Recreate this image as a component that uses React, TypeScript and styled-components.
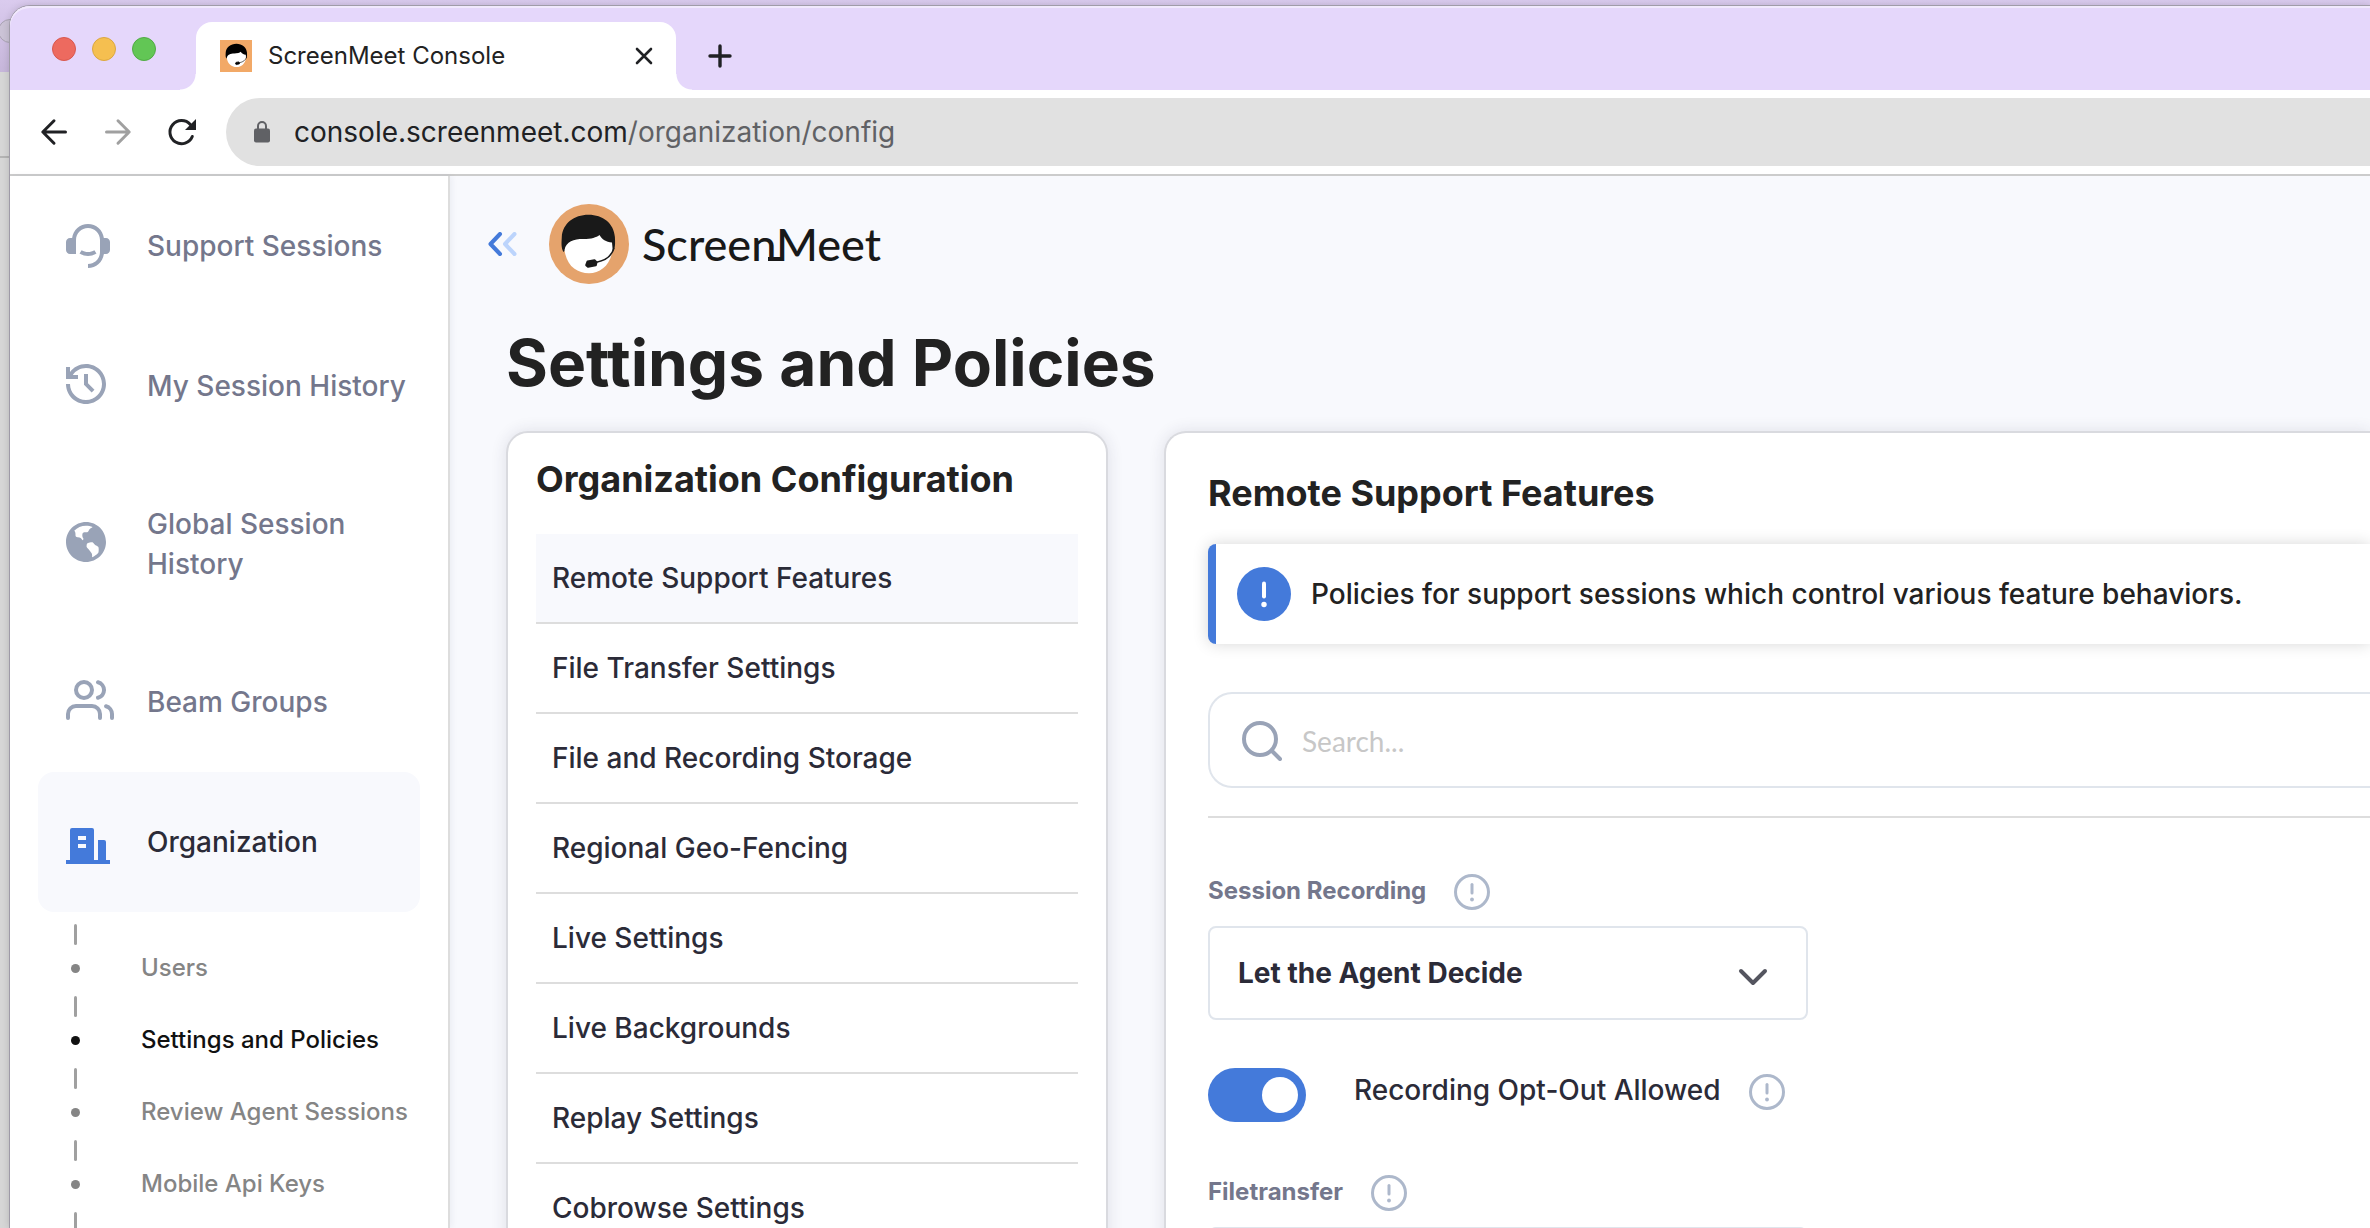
import React from "react";
import styled, { createGlobalStyle } from "styled-components";
import { RiCustomerService2Fill, RiEarthFill, RiHistoryLine } from "react-icons/ri";

const sans = `Inter, "Liberation Sans", sans-serif`;

const color = {
  page: "#f8f9fd",
  ink: "#222222",
  navy: "#2b2b38",
  slate: "#74778c",
  icon: "#99a3b7",
  hint: "#adb8cb",
  blue: "#447ada",
  line: "#dddddd",
  field: "#e0e5ec",
};

const GlobalStyle = createGlobalStyle`
  *, *::before, *::after { box-sizing: border-box; }
  body { margin: 0; font-family: ${sans}; color: ${color.ink}; }
  h1, h2, p, ul { margin: 0; padding: 0; }
  ul { list-style: none; }
  a { color: inherit; text-decoration: none; }
  button { border: 0; padding: 0; background: none; color: inherit; cursor: pointer; }
  svg { display: block; flex: none; }
`;

/* ---------- Desktop and browser window ---------- */

const Desktop = styled.div`
  position: relative;
  display: flex;
  height: 100vh;
  padding: 6px 0 0 10px;
  overflow: hidden;
  background:
    linear-gradient(#b4b4b4, #b4b4b4) 0 156px / 10px 2px no-repeat,
    linear-gradient(#dacbee, #c6b6da) 0 0 / 100% 72px no-repeat,
    #d6d6d6;
`;

const HiddenWindowButton = styled.span`
  position: absolute;
  top: 19px;
  left: -2px;
  width: 24px;
  height: 24px;
  border: 1px solid #a9a3b3;
  border-radius: 50%;
  background: #cbc3d6;
`;

const Window = styled.div`
  position: relative;
  display: flex;
  flex-direction: column;
  flex: 1;
  min-width: 0;
  border-radius: 20px 0 0 0;
  background: #ffffff;
  box-shadow: 0 0 0 1px #a09ca8, 0 0 8px rgba(0, 0, 0, 0.18);
`;

const TabStrip = styled.div`
  display: flex;
  align-items: flex-end;
  flex: none;
  height: 84px;
  padding-left: 42px;
  border-radius: 20px 0 0 0;
  background: #e5d7fb;
  box-shadow: inset 0 2px 0 #f1e9fd;
`;

const WindowButtons = styled.div`
  display: flex;
  gap: 16px;
  margin: 0 40px 29px 0;
`;

const WindowButton = styled.button<{ $fill: string; $edge: string }>`
  width: 24px;
  height: 24px;
  border: 1px solid ${(p) => p.$edge};
  border-radius: 50%;
  background: ${(p) => p.$fill};
`;

const Tab = styled.div`
  position: relative;
  display: flex;
  align-items: center;
  gap: 16px;
  width: 480px;
  height: 68px;
  padding: 0 20px 0 24px;
  border-radius: 16px 16px 0 0;
  background: #ffffff;

  &::before,
  &::after {
    content: "";
    position: absolute;
    bottom: 0;
    width: 16px;
    height: 16px;
  }
  &::before {
    right: 100%;
    background: radial-gradient(circle at 0 0, transparent 15px, #ffffff 16px);
  }
  &::after {
    left: 100%;
    background: radial-gradient(circle at 100% 0, transparent 15px, #ffffff 16px);
  }
`;

const TabTitle = styled.span`
  flex: 1;
  font-size: 24px;
  line-height: 32px;
  white-space: nowrap;
`;

const NewTabButton = styled.button`
  margin: 0 0 22px 32px;
`;

const Toolbar = styled.div`
  display: flex;
  align-items: center;
  flex: none;
  height: 86px;
  padding-left: 28px;
  border-bottom: 2px solid #cccccc;
`;

const ToolbarButtons = styled.div`
  display: flex;
  gap: 32px;
  margin-right: 28px;
`;

const AddressBar = styled.div`
  display: flex;
  align-items: center;
  gap: 24px;
  flex: 1;
  height: 68px;
  padding-left: 28px;
  border-radius: 34px 0 0 34px;
  background: #e1e1e1;
`;

const Url = styled.div`
  font-size: 28px;
  line-height: 36px;
  color: #202124;
  white-space: nowrap;
`;

const UrlPath = styled.span`
  color: #606165;
`;

const Page = styled.div`
  display: flex;
  flex: 1;
  min-height: 0;
  background: ${color.page};
`;

/* ---------- Sidebar ---------- */

const Sidebar = styled.nav`
  flex: none;
  width: 440px;
  padding: 0 28px;
  border-right: 2px solid ${color.line};
  background: #ffffff;
  box-shadow: 2px 0 6px rgba(40, 50, 80, 0.06);
`;

const NavItem = styled.a<{ $active?: boolean }>`
  display: flex;
  align-items: center;
  gap: 33px;
  padding: 48px 8px 48px 28px;
  border-radius: 16px;
  background: ${(p) => (p.$active ? color.page : "transparent")};
  color: ${(p) => (p.$active ? color.navy : color.slate)};
  font-size: 28px;
  font-weight: 500;
  line-height: 40px;
`;

const NavIcon = styled.span<{ $active?: boolean }>`
  flex: none;
  width: 48px;
  color: ${(p) => (p.$active ? color.blue : color.icon)};
`;

const SubItem = styled.a<{ $active?: boolean }>`
  display: grid;
  grid-template-columns: 12px auto;
  justify-items: center;
  justify-content: start;
  column-gap: 60px;
  padding: 12px 0 0 31px;
  color: ${(p) => (p.$active ? "#111111" : "#858585")};
  font-size: 24px;
  font-weight: 500;
  line-height: 32px;
  white-space: nowrap;
`;

const Tick = styled.span`
  grid-column: 1 / -1;
  justify-self: start;
  width: 3px;
  height: 21px;
  margin: 0 0 7px 5px;
  border-radius: 2px;
  background: #a0a0a0;
`;

const Dot = styled.span`
  align-self: center;
  width: 9px;
  height: 9px;
  border-radius: 50%;
  background: currentColor;
`;

const Trail = styled.div`
  padding: 12px 0 0 31px;
`;

/* ---------- Main column ---------- */

const Main = styled.main`
  display: flex;
  flex-direction: column;
  flex: 1;
  min-width: 0;
  padding: 28px 0 0 38px;
`;

const BrandBar = styled.header`
  display: flex;
  align-items: center;
`;

const CollapseButton = styled.button`
  margin-right: 32px;
`;

const BrandLink = styled.a`
  display: flex;
  align-items: center;
  gap: 13px;
`;

const Wordmark = styled.span`
  position: relative;
  font-family: Lato, "Open Sans", sans-serif;
  font-size: 45px;
  font-weight: 500;
  line-height: 56px;
  color: #191919;

  &::after {
    content: "";
    position: absolute;
    top: 41px;
    left: 126px;
    width: 13px;
    height: 4px;
    background: currentColor;
  }
`;

const Title = styled.h1`
  margin: 39px 0 28px 18px;
  font-size: 64px;
  font-weight: 700;
  line-height: 80px;
`;

const Columns = styled.div`
  display: flex;
  flex: 1;
  gap: 56px;
  padding-left: 18px;
`;

const Card = styled.section`
  border: 2px solid #d9dadf;
  border-radius: 22px;
  background: #ffffff;
  box-shadow: 0 0 16px rgba(40, 45, 70, 0.12);
`;

const MenuCard = styled(Card)`
  flex: none;
  width: 602px;
  padding: 24px 28px;
`;

const DetailCard = styled(Card)`
  flex: 1;
  min-width: 0;
  padding: 38px 0 38px 42px;
  border-right: 0;
  border-radius: 22px 0 0 22px;
`;

const CardTitle = styled.h2<{ $gap: number }>`
  margin-bottom: ${(p) => p.$gap}px;
  font-size: 36px;
  font-weight: 700;
  line-height: 44px;
`;

const MenuLink = styled.a<{ $active?: boolean }>`
  display: block;
  padding: 24px 16px;
  border-bottom: 2px solid ${color.line};
  background: ${(p) => (p.$active ? color.page : "transparent")};
  color: ${color.navy};
  font-size: 28px;
  font-weight: 500;
  line-height: 40px;
`;

const Banner = styled.div`
  display: flex;
  align-items: center;
  gap: 20px;
  height: 100px;
  padding-left: 21px;
  border-left: 8px solid ${color.blue};
  border-radius: 8px 0 0 8px;
  background: #ffffff;
  box-shadow: 0 0 16px rgba(0, 0, 0, 0.16);
  font-size: 28px;
  font-weight: 500;
  line-height: 40px;
`;

const SearchField = styled.label`
  display: flex;
  align-items: center;
  gap: 20px;
  height: 96px;
  margin-top: 48px;
  padding: 2px 0 0 32px;
  border: 2px solid ${color.field};
  border-right: 0;
  border-radius: 24px 0 0 24px;
`;

const SearchInput = styled.input`
  flex: 1;
  min-width: 0;
  padding: 0;
  border: 0;
  outline: 0;
  background: transparent;
  font-family: Lato, sans-serif;
  font-size: 28px;
  line-height: 36px;
  color: ${color.navy};

  &::placeholder {
    color: #c7c7c7;
    opacity: 1;
  }
`;

const Divider = styled.hr`
  height: 2px;
  margin: 28px 0 56px;
  border: 0;
  background: ${color.line};
`;

const Caption = styled.div`
  display: flex;
  gap: 28px;
  height: 36px;
`;

const FieldLabel = styled.label`
  color: ${color.slate};
  font-size: 24px;
  font-weight: 700;
  line-height: 34px;
`;

const SelectBox = styled.div`
  display: grid;
  align-items: center;
  width: 600px;
  margin-top: 16px;

  > * {
    grid-area: 1 / 1;
  }
  > svg {
    justify-self: end;
    margin: 8px 40px 0 0;
    pointer-events: none;
  }
`;

const Select = styled.select`
  appearance: none;
  width: 100%;
  height: 94px;
  padding: 0 80px 0 28px;
  border: 2px solid ${color.field};
  border-radius: 8px;
  background: #ffffff;
  color: ${color.navy};
  font-family: inherit;
  font-size: 28px;
  font-weight: 700;
`;

const ToggleRow = styled.div`
  display: flex;
  align-items: flex-start;
  gap: 48px;
  margin: 48px 0 53px;
`;

const Toggle = styled.input`
  appearance: none;
  display: flex;
  align-items: center;
  justify-content: flex-end;
  width: 98px;
  height: 54px;
  margin: 0;
  padding: 0 8px;
  border-radius: 27px;
  background: ${color.blue};

  &::before {
    content: "";
    width: 36px;
    height: 36px;
    border-radius: 50%;
    background: #ffffff;
  }
  &:not(:checked) {
    justify-content: flex-start;
    background: ${color.icon};
  }
`;

const ToggleCaption = styled(Caption)`
  margin-top: 6px;
`;

const ToggleLabel = styled.label`
  color: ${color.navy};
  font-size: 28px;
  font-weight: 500;
  line-height: 32px;
`;

/* ---------- Drawings ---------- */

const AgentHead = ({ hair }: { hair: string }) => (
  <>
    <path
      d="M14.6 48C11.8 44 12.6 38 12.8 33C13.6 19.500 25 10.700 39.500 10.700C54 10.700 65 19.500 65.900 33C66.100 38 66.600 43 64.500 47L58 40L40 36L22 40Z"
      fill={hair}
    />
    <path
      d="M15.500 46C17 37.500 25 35 34 35C43 35 47 33.500 50.500 31C53 35.500 57 38 63 38.500L63.600 45C62 61 51.500 69.200 40 69.200C28 69.200 17.500 62 15.500 46Z"
      fill="#ffffff"
    />
    <path d="M65 44C63 51.500 56.500 56.500 47.500 58.200" fill="none" stroke={hair} strokeWidth="1.500" />
    <path
      d="M38.500 57.500L45.500 56.200L47.500 58.200L46.800 61.200L39 62.800L37.200 61.200Z"
      fill={hair}
      stroke={hair}
      strokeWidth="2"
      strokeLinejoin="round"
    />
  </>
);

const BrandMark = () => (
  <svg width="80" height="80" viewBox="0 0 80 80" aria-hidden="true">
    <circle cx="40" cy="40" r="40" fill="#e5a36c" />
    <AgentHead hair="#191919" />
  </svg>
);

const Favicon = () => (
  <svg width="32" height="32" viewBox="0 0 32 32" aria-hidden="true">
    <rect width="32" height="32" fill="#f2a967" />
    <g transform="translate(0.6 -0.6) scale(0.4)">
      <AgentHead hair="#000000" />
    </g>
  </svg>
);

const CloseIcon = () => (
  <svg width="24" height="24" viewBox="0 0 24 24" stroke="#202124" strokeWidth="2.600" strokeLinecap="round">
    <path d="M5 5L19 19M19 5L5 19" />
  </svg>
);

const PlusIcon = () => (
  <svg width="24" height="24" viewBox="0 0 24 24" stroke="#202124" strokeWidth="3.400" strokeLinecap="round">
    <path d="M12 2V22M2 12H22" />
  </svg>
);

const ArrowIcon = ({ forward }: { forward?: boolean }) => (
  <svg
    width="32"
    height="32"
    viewBox="0 0 32 32"
    fill="none"
    stroke={forward ? "#a0a0a0" : "#202124"}
    strokeWidth="3"
    strokeLinecap="round"
    strokeLinejoin="round"
  >
    <path d={forward ? "M4.500 16H27M16 4.800L27.200 16L16 27.200" : "M27.500 16H5M16 4.800L4.800 16L16 27.200"} />
  </svg>
);

const ReloadIcon = () => (
  <svg width="32" height="32" viewBox="0 0 32 32">
    <path d="M26.300 20.500A11.600 11.600 0 1 1 24.300 8.500" fill="none" stroke="#202124" strokeWidth="3" strokeLinecap="round" />
    <path d="M30 3V14H19Z" fill="#202124" />
  </svg>
);

const LockIcon = () => (
  <svg width="16" height="22" viewBox="0 0 16 22" aria-hidden="true">
    <rect y="7.500" width="16" height="14" rx="2" fill="#606165" />
    <path d="M4 9V5A4 4 0 0 1 12 5V9" fill="none" stroke="#606165" strokeWidth="2" />
  </svg>
);

const CollapseIcon = () => (
  <svg width="29" height="24" viewBox="0 0 29 24" fill="none" strokeWidth="4" strokeLinecap="round" strokeLinejoin="round">
    <path d="M12 2L2.500 12L12 22" stroke={color.blue} />
    <path d="M26.500 2L17 12L26.500 22" stroke="#bcd4fc" />
  </svg>
);

const GroupsIcon = () => (
  <svg
    width="48"
    height="44"
    viewBox="0 2 24 22"
    fill="none"
    stroke="currentColor"
    strokeWidth="2"
    strokeLinecap="round"
    strokeLinejoin="round"
  >
    <path d="M17 21v-2a4 4 0 0 0-4-4H5a4 4 0 0 0-4 4v2" />
    <circle cx="9" cy="7" r="4" />
    <path d="M23 21v-2a4 4 0 0 0-3-3.870" />
    <path d="M16 3.130a4 4 0 0 1 0 7.750" />
  </svg>
);

const BuildingIcon = () => (
  <svg width="44" height="44" viewBox="1 -1 22 22" fill="currentColor">
    <path d="M21 19h2v2H1v-2h2V4a1 1 0 0 1 1-1h10a1 1 0 0 1 1 1v15h2V9h3a1 1 0 0 1 1 1v9zM7 11v2h4v-2H7zm0-4v2h4V7H7z" />
  </svg>
);

const NoticeIcon = () => (
  <svg width="54" height="54" viewBox="0 0 54 54" aria-hidden="true">
    <circle cx="27" cy="27" r="27" fill={color.blue} />
    <path d="M27 16.500V29.500" stroke="#ffffff" strokeWidth="4" strokeLinecap="round" />
    <circle cx="27" cy="37.500" r="2.700" fill="#ffffff" />
  </svg>
);

const SearchIcon = () => (
  <svg width="40" height="40" viewBox="0 0 40 40" fill="none" stroke={color.icon} strokeWidth="4" strokeLinecap="round">
    <circle cx="18" cy="18" r="16" />
    <path d="M30 30L38 38" />
  </svg>
);

const HintIcon = () => (
  <svg width="36" height="36" viewBox="0 0 36 36" fill="none" stroke={color.hint} strokeWidth="3" strokeLinecap="round">
    <circle cx="18" cy="18" r="16.500" />
    <path d="M18 10.500V19" />
    <circle cx="18" cy="25.500" r="1.900" fill={color.hint} stroke="none" />
  </svg>
);

const ChevronIcon = () => (
  <svg width="30" height="18" viewBox="0 0 30 18" fill="none" stroke="#54555f" strokeWidth="4" strokeLinecap="round" strokeLinejoin="round">
    <path d="M3 3L15 15L27 3" />
  </svg>
);

/* ---------- Content ---------- */

const navItems = [
  { label: "Support Sessions", icon: <RiCustomerService2Fill size={44} viewBox="1 1 22 22" /> },
  { label: "My Session History", icon: <RiHistoryLine size={44} viewBox="2 2 22 22" /> },
  { label: "Global Session History", icon: <RiEarthFill size={44} viewBox="2 2 22 22" /> },
  { label: "Beam Groups", icon: <GroupsIcon /> },
  { label: "Organization", icon: <BuildingIcon />, active: true },
];

const subItems = ["Users", "Settings and Policies", "Review Agent Sessions", "Mobile Api Keys"];

const menuItems = [
  "Remote Support Features",
  "File Transfer Settings",
  "File and Recording Storage",
  "Regional Geo-Fencing",
  "Live Settings",
  "Live Backgrounds",
  "Replay Settings",
  "Cobrowse Settings",
];

const PolicySelect = ({ id, label }: { id: string; label: string }) => (
  <>
    <Caption>
      <FieldLabel htmlFor={id}>{label}</FieldLabel>
      <button type="button" aria-label={`About ${label}`}>
        <HintIcon />
      </button>
    </Caption>
    <SelectBox>
      <Select id={id} defaultValue="agent">
        <option value="agent">Let the Agent Decide</option>
      </Select>
      <ChevronIcon />
    </SelectBox>
  </>
);

export default function App() {
  return (
    <Desktop>
      <GlobalStyle />
      <HiddenWindowButton />
      <Window>
        <TabStrip>
          <WindowButtons>
            <WindowButton $fill="#ed6a5f" $edge="#d8584e" aria-label="Close window" />
            <WindowButton $fill="#f5bf50" $edge="#dba73f" aria-label="Minimize window" />
            <WindowButton $fill="#62c655" $edge="#50ab44" aria-label="Zoom window" />
          </WindowButtons>
          <Tab>
            <Favicon />
            <TabTitle>ScreenMeet Console</TabTitle>
            <button type="button" aria-label="Close tab">
              <CloseIcon />
            </button>
          </Tab>
          <NewTabButton type="button" aria-label="New tab">
            <PlusIcon />
          </NewTabButton>
        </TabStrip>
        <Toolbar>
          <ToolbarButtons>
            <button type="button" aria-label="Back">
              <ArrowIcon />
            </button>
            <button type="button" aria-label="Forward">
              <ArrowIcon forward />
            </button>
            <button type="button" aria-label="Reload">
              <ReloadIcon />
            </button>
          </ToolbarButtons>
          <AddressBar>
            <LockIcon />
            <Url role="textbox" aria-label="Address">
              console.screenmeet.com<UrlPath>/organization/config</UrlPath>
            </Url>
          </AddressBar>
        </Toolbar>
        <Page>
          <Sidebar>
            {navItems.map((item) => (
              <NavItem key={item.label} href="#" $active={item.active}>
                <NavIcon $active={item.active}>{item.icon}</NavIcon>
                {item.label}
              </NavItem>
            ))}
            {subItems.map((label) => (
              <SubItem key={label} href="#" $active={label === "Settings and Policies"}>
                <Tick />
                <Dot />
                {label}
              </SubItem>
            ))}
            <Trail>
              <Tick as="div" />
            </Trail>
          </Sidebar>
          <Main>
            <BrandBar>
              <CollapseButton type="button" aria-label="Collapse menu">
                <CollapseIcon />
              </CollapseButton>
              <BrandLink href="#">
                <BrandMark />
                <Wordmark>ScreenMeet</Wordmark>
              </BrandLink>
            </BrandBar>
            <Title>Settings and Policies</Title>
            <Columns>
              <MenuCard>
                <CardTitle $gap={33}>Organization Configuration</CardTitle>
                <ul>
                  {menuItems.map((label, i) => (
                    <li key={label}>
                      <MenuLink href="#" $active={i === 0}>
                        {label}
                      </MenuLink>
                    </li>
                  ))}
                </ul>
              </MenuCard>
              <DetailCard>
                <CardTitle $gap={29}>Remote Support Features</CardTitle>
                <Banner>
                  <NoticeIcon />
                  <p>Policies for support sessions which control various feature behaviors.</p>
                </Banner>
                <SearchField>
                  <SearchIcon />
                  <SearchInput type="search" placeholder="Search..." aria-label="Search" />
                </SearchField>
                <Divider />
                <PolicySelect id="session-recording" label="Session Recording" />
                <ToggleRow>
                  <Toggle id="opt-out" type="checkbox" defaultChecked />
                  <ToggleCaption>
                    <ToggleLabel htmlFor="opt-out">Recording Opt-Out Allowed</ToggleLabel>
                    <button type="button" aria-label="About Recording Opt-Out Allowed">
                      <HintIcon />
                    </button>
                  </ToggleCaption>
                </ToggleRow>
                <PolicySelect id="filetransfer" label="Filetransfer" />
              </DetailCard>
            </Columns>
          </Main>
        </Page>
      </Window>
    </Desktop>
  );
}
